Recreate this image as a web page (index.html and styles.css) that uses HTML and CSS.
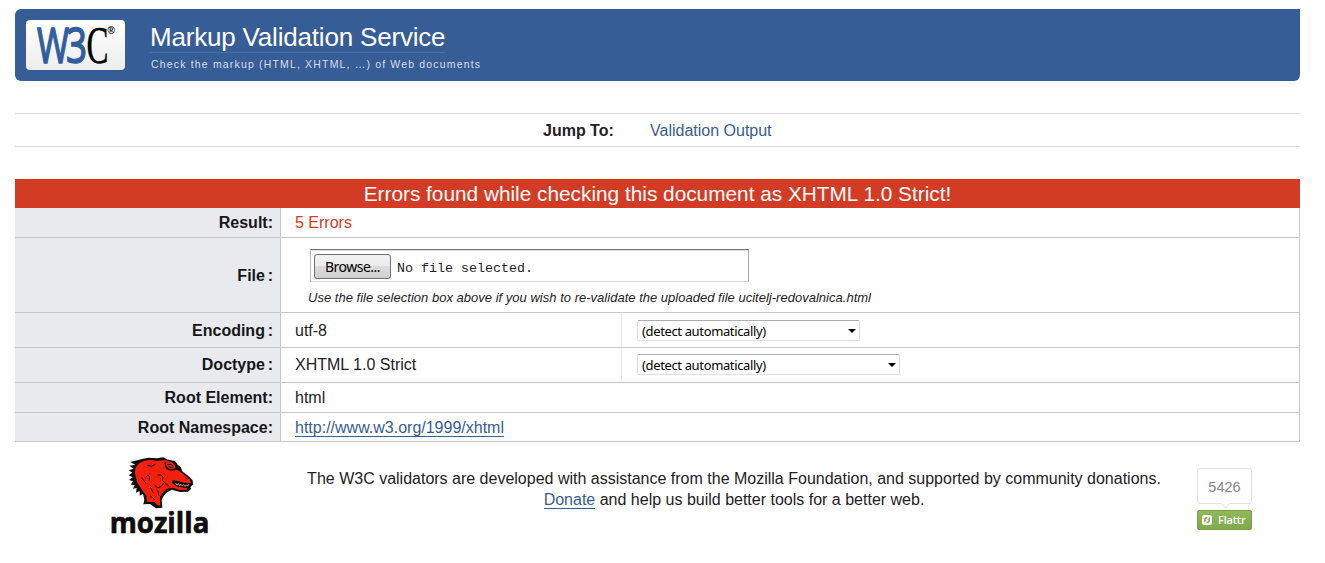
FILE: index.html
```html
<!DOCTYPE html>
<html lang="en">
<head>
<meta charset="utf-8">
<title>Markup Validation Service</title>
<link rel="stylesheet" href="styles.css">
</head>
<body>
<header class="banner">
  <div class="w3c">
    <svg width="99" height="50" viewBox="0 0 99 50" role="img" aria-label="W3C">
      <text class="w3" x="11" y="43" textLength="32" lengthAdjust="spacingAndGlyphs">W</text>
      <text class="w3" x="40" y="43" textLength="21" lengthAdjust="spacingAndGlyphs">3</text>
      <text class="c" x="60.5" y="43" textLength="22" lengthAdjust="spacingAndGlyphs">C</text>
      <text class="reg" x="81.5" y="14">®</text>
    </svg>
  </div>
  <div class="titles">
    <h1>Markup Validation Service</h1>
    <p>Check the markup (HTML, XHTML, …) of Web documents</p>
  </div>
</header>
<nav class="jump"><strong>Jump To:</strong><a href="#result">Validation Output</a></nav>
<main id="result" class="results">
  <h2>Errors found while checking this document as XHTML 1.0 Strict!</h2>
  <div class="row r30"><div class="label">Result:</div><div class="value error">5 Errors</div></div>
  <div class="row r75">
    <div class="label tight low">File :</div>
    <div class="value file">
      <div class="filebox"><button>Browse...</button><span>No file selected.</span></div>
      <p class="hint">Use the file selection box above if you wish to re-validate the uploaded file ucitelj-redovalnica.html</p>
    </div>
  </div>
  <div class="row r35"><div class="label tight low">Encoding :</div><div class="value half low">utf-8</div><div class="option"><div class="select enc"><span>(detect automatically)</span><i></i></div></div></div>
  <div class="row r35"><div class="label tight">Doctype :</div><div class="value half">XHTML 1.0 Strict</div><div class="option"><div class="select doc"><span>(detect automatically)</span><i></i></div></div></div>
  <div class="row r30"><div class="label">Root Element:</div><div class="value">html</div></div>
  <div class="row r29"><div class="label low">Root Namespace:</div><div class="value low"><a class="link" href="#ns">http://www.w3.org/1999/xhtml</a></div></div>
</main>
<footer class="foot">
  <svg class="mozilla" width="120" height="95" viewBox="0 0 360 285" role="img" aria-label="mozilla">
    <path d="M126 27 L112 31 L90 36 L106 44 L88 47 L101 56 L86 61 L97 68 L86 76 L98 82 L87 90 L99 94 L92 104 L104 105 L99 116 L110 114 L108 128 L119 123 L119 137 L129 131 L133 150 L130 163 L150 162 L168 175 L187 173 L185 151 Q188 138 202 126 L215 119 L241 126 L264 125 L273 117 L271 111 L279 104 L278 91 L266 79 L246 63 L243 52 L233 44 L225 33 L204 29 L190 22 L170 25 L145 23 Z" fill="#100c0c"/>
    <path d="M118 39 Q143 25 170 33 L194 30 L214 36 L224 45 L227 57 L238 63 L269 88 L273 99 L252 98 L221 90 L215 98 L230 109 L263 114 L260 119 L239 120 L218 113 L201 116 L187 130 L180 141 L181 167 L173 166 L162 156 L141 155 L139 137 L128 122 L112 98 L105 72 L106 54 Z" fill="#f3200d"/>
    <g fill="none" stroke="#160b0b" stroke-width="3" stroke-linecap="round">
      <path d="M143 47 Q156 53 166 43 M138 81 Q151 66 148 90 M164 105 Q176 124 190 101 M174 75 Q193 72 187 91 L207 109 M151 112 L160 128 M174 122 L176 136 M151 138 L163 148 M126 84 L137 99"/>
      <path d="M196 38 Q194 58 216 60 L231 56" stroke-width="5"/>
      <path d="M204 43 Q213 40 220 48 M207 51 H217"/>
      <path d="M219 93 Q241 105 273 101 M225 103 Q244 112 264 112" stroke-width="4"/>
      <path d="M256 83 l5 3"/>
    </g>
    <path d="M227 99 l4 6 4-4 4 6 4-4 4 5 4-4 4 5 4-4 4 3 3-5" fill="none" stroke="#fff" stroke-width="2"/>
    <text x="29" y="250" textLength="299" lengthAdjust="spacingAndGlyphs">mozilla</text>
  </svg>
  <p class="credit"><span class="line1">The W3C validators are developed with assistance from the Mozilla Foundation, and supported by community donations.</span><br><a class="link" href="#donate">Donate</a> and help us build better tools for a better web.</p>
  <div class="flattr">
    <div class="count">5426</div>
    <div class="button"><svg width="10" height="10" viewBox="0 0 10 10"><rect width="10" height="10" rx="2.5" fill="#fff"/><path d="M2 8V4.5Q2 2 4.5 2H6L3.8 4.2V6.2ZM8 2V5.5Q8 8 5.5 8H4L6.2 5.8V3.8Z" fill="#86b052"/></svg><span>Flattr</span></div>
  </div>
</footer>
</body>
</html>
```
FILE: styles.css
```css
* { box-sizing: border-box; }
body { margin: 0; padding: 9px 25px 0 15px; background: #fff; color: #1f2126; font: 16px/20px "Liberation Sans", Arial, sans-serif; }
h1, h2, p { margin: 0; font-weight: normal; }
a { color: #365d95; text-decoration: none; }
.link { border-bottom: 1px solid #365d95; line-height: 16px; display: inline-block; }
.banner { display: flex; height: 72px; padding: 11px 11px 0; background: #365d95; border-radius: 6px 0 6px 6px; }
.w3c { width: 99px; height: 50px; border-radius: 4px; background: linear-gradient(#fff, #eee); }
.w3c svg { display: block; overflow: visible; }
.w3 { font: 50px "Open Sans", sans-serif; fill: #2f5f9e; stroke: #2f5f9e; stroke-width: 1.6; }
.c { font: 52px "Liberation Serif", serif; fill: #000; stroke: #000; stroke-width: .5; }
.reg { font: bold 10px "Liberation Sans", sans-serif; }
.titles { margin-left: 25px; color: #fff; }
.titles h1 { width: 295px; height: 33px; border-bottom: 1px solid #4a6fa5; font-size: 26px; line-height: 34px; letter-spacing: -.19px; white-space: nowrap; }
.titles p { margin: 4px 0 0 1px; font-size: 10.5px; line-height: 15px; letter-spacing: 1.17px; color: #d5dfec; white-space: nowrap; }
.jump { display: flex; height: 34px; margin: 32px 0; border: solid #dcdcdc; border-width: 1px 0; padding-left: 528px; gap: 36px; line-height: 33px; }
.jump strong { width: 71px; white-space: nowrap; }
.results h2 { height: 29px; background: #d33c24; color: #fff; text-align: center; font-size: 20.8px; line-height: 30px; }
.row { display: flex; border: solid #c8c8c8; border-width: 0 1px 1px 0; }
.r29 { height: 29px; }
.r30 { height: 30px; }
.r35 { height: 35px; }
.r75 { height: 75px; }
.label { display: flex; align-items: center; justify-content: flex-end; width: 266px; padding-right: 7px; border-right: 1px solid #c8c8c8; background: #e9eaee; color: #15161a; font-weight: bold; }
.tight { word-spacing: -1.7px; }
.value { display: flex; align-items: center; padding-left: 14px; }
.low { padding-top: 2px; }
.half { width: 341px; border-right: 1px solid #e7e7ec; }
.option { width: 340px; padding: 7px 0 0 15px; }
.error { color: #d33c24; }
.file { display: block; padding: 11px 0 0 27px; }
.filebox { display: flex; align-items: center; width: 439px; height: 33px; margin-left: 2px; padding-left: 3px; border: 1px solid; border-color: #777 #aaa #d5d5d5 #bbb; box-shadow: inset 0 1px #ddd; font: 13.33px "Liberation Mono", monospace; }
.filebox button { width: 77px; height: 25px; margin-top: 1px; padding: 0; border: 1px solid #707070; border-radius: 3px; background: linear-gradient(#f2f2f2, #ebebeb 50%, #ddd 50%, #cfcfcf); font: 14px "Noto Sans", sans-serif; letter-spacing: -.5px; color: #000; }
.filebox span { margin: 5px 0 0 6px; white-space: nowrap; }
.hint { font-size: 13px; font-style: italic; line-height: 16px; letter-spacing: .015px; margin-top: 8px; white-space: nowrap; }
.select { display: flex; justify-content: space-between; height: 21px; padding: 0 3px 0 4px; border: 1px solid #dfe0e6; border-top-color: #abadb3; border-radius: 2px; font: 13px/21px "Noto Sans", sans-serif; letter-spacing: -.36px; color: #000; }
.enc { width: 223px; }
.doc { width: 263px; margin-top: -1px; }
.select i { width: 0; height: 0; margin-top: 8px; border: 4px solid transparent; border-top-color: #000; border-bottom: 0; }
.foot { display: flex; margin-top: 8px; }
.mozilla { flex: none; margin-left: 85px; }
.mozilla text { font: bold 88px "Open Sans", sans-serif; fill: #100c0c; stroke: #100c0c; stroke-width: 2; }
.credit { flex: none; width: 868px; margin: 18px 0 0 80px; text-align: center; line-height: 21px; }
.line1 { white-space: nowrap; }
.flattr { flex: none; width: 55px; margin: 18px 0 0 29px; font-family: "Open Sans", sans-serif; }
.count { position: relative; height: 36px; border: 1px solid #e3e3e3; border-radius: 3px; color: #888; font: 14.5px/36px "Liberation Sans", sans-serif; text-align: center; }
.count::after { content: ""; position: absolute; left: 24px; bottom: -4px; width: 6px; height: 6px; background: #fff; border: solid #e3e3e3; border-width: 0 1px 1px 0; transform: rotate(45deg); }
.button { display: flex; align-items: center; gap: 6px; height: 20px; margin-top: 6px; padding-left: 4px; border: 1px solid #76a047; border-radius: 2px; background: linear-gradient(#91b95c, #7fa94d); color: #fff; font-size: 11px; font-weight: 600; letter-spacing: -.2px; }
```
